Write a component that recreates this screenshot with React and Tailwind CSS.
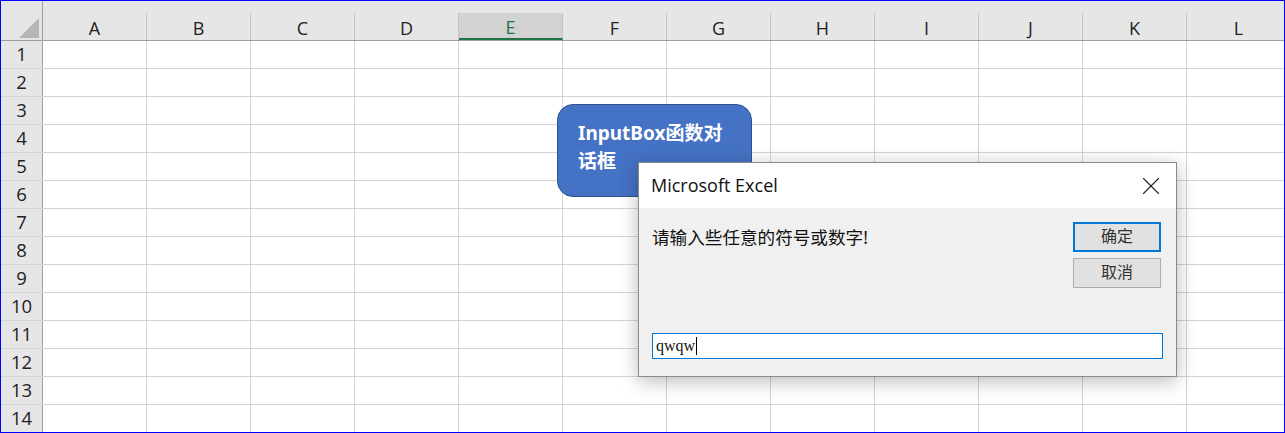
import { X } from 'lucide-react'

const cols = ['A', 'B', 'C', 'D', 'E', 'F', 'G', 'H', 'I', 'J', 'K', 'L']
const rows = Array.from({ length: 14 }, (_, i) => i + 1)

const uiFont = { fontFamily: '"Open Sans", "Noto Sans", "Noto Sans CJK SC", sans-serif' }
const cjkFont = { fontFamily: '"Noto Sans", "Noto Sans CJK SC", sans-serif' }
const serifFont = { fontFamily: '"Liberation Serif", "Noto Sans CJK SC", serif' }

function HeaderRow() {
  return (
    <div className="flex h-[40px] shrink-0 border-b border-[#9f9f9f] bg-[#e6e6e6]">
      {/* corner */}
      <div className="relative w-[42px] shrink-0 border-r border-[#9f9f9f]">
        <div className="absolute right-[3px] bottom-[2px] h-0 w-0 border-b-[20px] border-l-[20px] border-b-[#b5b5b5] border-l-transparent" />
      </div>
      {cols.map((c) => (
        <div key={c} className="flex w-[104px] shrink-0 flex-col">
          <div className="h-[12px]" />
          <div
            className={
              'flex flex-1 items-center justify-center border-r border-[#c4c4c4] text-[18px] leading-none ' +
              (c === 'E'
                ? 'border-b-2 border-b-[#217346] bg-[#d2d2d2] text-[#217346]'
                : 'text-[#222]')
            }
          >
            <span className="pt-[2px]">{c}</span>
          </div>
        </div>
      ))}
    </div>
  )
}

function GridRow({ n }) {
  return (
    <div className="flex h-[28px] shrink-0 border-b border-[#d4d4d4]">
      <div className="flex w-[42px] shrink-0 items-center justify-center border-r border-[#9f9f9f] bg-[#e6e6e6] text-[18.5px] leading-none text-[#222]">
        {n}
      </div>
      {cols.map((c) => (
        <div key={c} className="w-[104px] shrink-0 border-r border-[#d4d4d4] bg-white" />
      ))}
    </div>
  )
}

export default function App() {
  return (
    <div
      className="relative h-[433px] w-[1285px] overflow-hidden border border-[#0000ff] bg-white"
      style={uiFont}
    >
      <div className="flex flex-col">
        <HeaderRow />
        {rows.map((n) => (
          <GridRow key={n} n={n} />
        ))}
      </div>

      {/* callout shape */}
      <div
        className="absolute left-[556px] top-[103px] h-[93px] w-[195px] rounded-[16px] border border-[#2f528f] bg-[#4472c4] px-[20px] pt-[14px] text-[19px] font-bold leading-[28px] text-white"
        style={cjkFont}
      >
        InputBox函数对
        <br />
        话框
      </div>

      {/* InputBox dialog */}
      <div className="absolute left-[637px] top-[161px] flex h-[215px] w-[539px] flex-col border border-[#8a8a8a] bg-[#f0f0f0] shadow-[0_4px_18px_rgba(0,0,0,0.28)]">
        <div className="flex h-[45px] shrink-0 items-center justify-between bg-white pl-[12px] pr-[10px]">
          <span className="text-[18px] text-[#111]" style={uiFont}>Microsoft Excel</span>
          <X size={30} strokeWidth={0.9} className="text-[#222]" />
        </div>
        <div className="flex flex-1 flex-col px-[13px]">
          <div className="flex justify-between pt-[14px]">
            <div className="pt-[4px] text-[17.6px] leading-[22px] text-[#111]" style={cjkFont}>
              请输入些任意的符号或数字!
            </div>
            <div className="mr-[2px] flex flex-col gap-[6px]">
              <div
                className="flex h-[30px] w-[88px] items-center justify-center border-2 border-[#0078d7] bg-[#e1e1e1] text-[16px] text-[#333]"
                style={serifFont}
              >
                确定
              </div>
              <div
                className="flex h-[30px] w-[88px] items-center justify-center border border-[#adadad] bg-[#e1e1e1] text-[16px] text-[#333]"
                style={serifFont}
              >
                取消
              </div>
            </div>
          </div>
          <div className="mt-auto mb-[17px] flex h-[26px] items-center border border-[#0078d7] bg-white pl-[3px]">
            <span className="text-[16px] leading-none text-[#111]" style={serifFont}>qwqw</span>
            <span className="ml-[1px] h-[18px] w-px bg-black" />
          </div>
        </div>
      </div>
    </div>
  )
}
